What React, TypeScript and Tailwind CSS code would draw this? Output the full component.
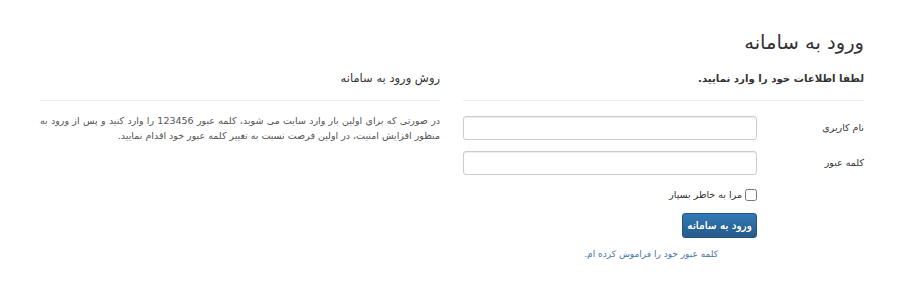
export default function App() {
  return (
    <div
      dir="rtl"
      className="min-h-[283px] bg-white text-[#333] pl-[40px] pr-[36px]"
      style={{ fontFamily: '"DejaVu Sans", Tahoma, sans-serif' }}
    >
      <div className="grid grid-cols-[401px_400px] gap-[23px]">
        {/* Login form */}
        <section>
          <h1 className="pt-[28px] text-[19.5px] leading-[30px] text-[#333]">ورود به سامانه</h1>
          <h2 className="mt-[11px] text-[10.2px] leading-[20px] font-bold text-[#333]">
            لطفا اطلاعات خود را وارد نمایید.
          </h2>
          <hr className="mt-[11px] border-t border-[#eee]" />

          <form className="mt-[15px] flex flex-col">
            <div className="flex items-center h-[24px]">
              <label className="w-[107px] shrink-0 text-[9.5px] text-[#333]">نام کاربری</label>
              <input
                type="text"
                className="w-[295px] h-[24px] rounded-[3px] border border-[#ccc] bg-white shadow-[inset_0_1px_1px_rgba(0,0,0,0.075)]"
              />
            </div>
            <div className="mt-[11px] flex items-center h-[24px]">
              <label className="w-[107px] shrink-0 text-[9.5px] text-[#333]">کلمه عبور</label>
              <input
                type="password"
                className="w-[295px] h-[24px] rounded-[3px] border border-[#ccc] bg-white shadow-[inset_0_1px_1px_rgba(0,0,0,0.075)]"
              />
            </div>

            <div className="mr-[107px] mt-[12px] flex items-center gap-[3px] text-[9.5px] leading-[16px]">
              <input type="checkbox" className="w-[12px] h-[12px] m-0" />
              <span>مرا به خاطر بسپار</span>
            </div>

            <div className="mr-[107px] mt-[9px]">
              <button
                type="button"
                className="h-[25px] w-[75px] rounded-[3px] border border-[#245580] bg-gradient-to-b from-[#337ab7] to-[#265a88] text-white text-[10.5px] [text-shadow:0_0_0.4px_#fff]"
              >
                ورود به سامانه
              </button>
            </div>

            <a href="#" className="mr-[146px] mt-[8px] text-[9px] leading-[16px] text-[#4a77a8]">
              کلمه عبور خود را فراموش کرده ام.
            </a>
          </form>
        </section>

        {/* Help */}
        <section>
          <h3 className="pt-[68px] text-[11.5px] leading-[20px] text-[#333]">روش ورود به سامانه</h3>
          <hr className="mt-[12px] border-t border-[#eee]" />
          <p className="mt-[12px] text-[9.5px] leading-[15px] text-[#555] text-justify">
            در صورتی که برای اولین بار وارد سایت می شوید، کلمه عبور 123456 را وارد کنید و پس از ورود به منظور افزایش امنیت، در اولین فرصت نسبت به تغییر کلمه عبور خود اقدام نمایید.
          </p>
        </section>
      </div>
    </div>
  );
}
